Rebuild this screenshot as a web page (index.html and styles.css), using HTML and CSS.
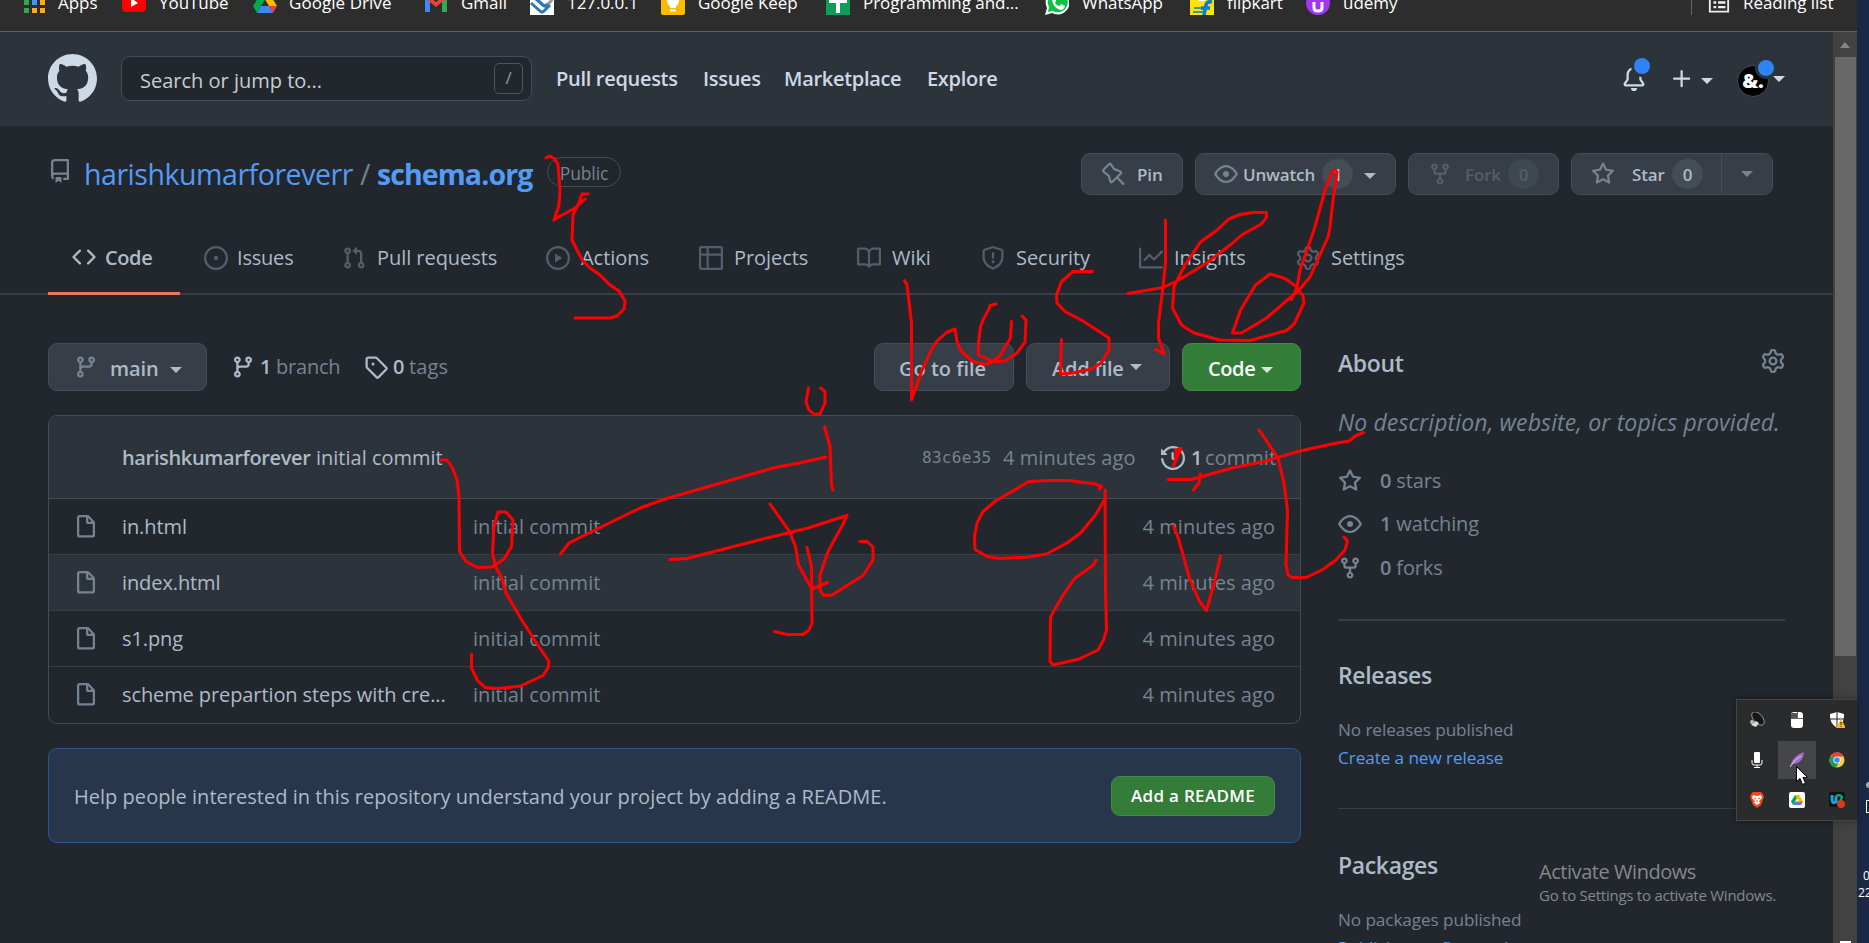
FILE: index.html
```
<!DOCTYPE html>
<html lang="en">
<head>
<meta charset="utf-8">
<title>harishkumarforeverr/schema.org</title>
<link rel="stylesheet" href="styles.css">
</head>
<body>
<svg class="defs" width="0" height="0">
  <symbol id="repo" viewBox="0 0 16 16"><path fill-rule="evenodd" d="M2 2.5A2.5 2.5 0 014.5 0h8.75a.75.75 0 01.75.75v12.5a.75.75 0 01-.75.75h-2.5a.75.75 0 110-1.5h1.75v-2h-8a1 1 0 00-.714 1.7.75.75 0 01-1.072 1.05A2.495 2.495 0 012 11.5v-9zm10.5-1V9h-8c-.356 0-.694.074-1 .208V2.5a1 1 0 011-1h8zM5 12.25v3.25a.25.25 0 00.4.2l1.45-1.087a.25.25 0 01.3 0L8.6 15.7a.25.25 0 00.4-.2v-3.25a.25.25 0 00-.25-.25h-3.5a.25.25 0 00-.25.25z"/></symbol>
  <symbol id="code" viewBox="0 0 16 16"><path fill-rule="evenodd" d="M4.72 3.22a.75.75 0 011.06 1.06L2.06 8l3.72 3.72a.75.75 0 11-1.06 1.06L.47 8.53a.75.75 0 010-1.06l4.25-4.25zm6.56 0a.75.75 0 10-1.06 1.06L13.94 8l-3.72 3.72a.75.75 0 101.06 1.06l4.25-4.25a.75.75 0 000-1.06l-4.25-4.25z"/></symbol>
  <symbol id="issue" viewBox="0 0 16 16"><path d="M8 9.5a1.5 1.5 0 100-3 1.5 1.5 0 000 3z"/><path fill-rule="evenodd" d="M8 0a8 8 0 100 16A8 8 0 008 0zM1.5 8a6.5 6.5 0 1113 0 6.5 6.5 0 01-13 0z"/></symbol>
  <symbol id="pull" viewBox="0 0 16 16"><path fill-rule="evenodd" d="M7.177 3.073L9.573.677A.25.25 0 0110 .854v4.792a.25.25 0 01-.427.177L7.177 3.427a.25.25 0 010-.354zM3.75 2.5a.75.75 0 100 1.5.75.75 0 000-1.5zm-2.25.75a2.25 2.25 0 113 2.122v5.256a2.251 2.251 0 11-1.5 0V5.372A2.25 2.25 0 011.5 3.25zM11 2.5h-1V4h1a1 1 0 011 1v5.628a2.251 2.251 0 101.5 0V5A2.5 2.5 0 0011 2.5zm1 10.25a.75.75 0 111.5 0 .75.75 0 01-1.5 0zM3.75 12a.75.75 0 100 1.5.75.75 0 000-1.5z"/></symbol>
  <symbol id="play" viewBox="0 0 16 16"><path fill-rule="evenodd" d="M1.5 8a6.5 6.5 0 1113 0 6.5 6.5 0 01-13 0zM8 0a8 8 0 100 16A8 8 0 008 0zM6.379 5.227A.25.25 0 006 5.442v5.117a.25.25 0 00.379.214l4.264-2.559a.25.25 0 000-.428L6.379 5.227z"/></symbol>
  <symbol id="table" viewBox="0 0 16 16"><path fill-rule="evenodd" d="M1.75 0A1.75 1.75 0 000 1.75v12.5C0 15.216.784 16 1.75 16h12.5A1.75 1.75 0 0016 14.25V1.75A1.75 1.75 0 0014.25 0H1.75zM1.5 1.75a.25.25 0 01.25-.25H5V5H1.5V1.75zM6.5 1.5V5h8V1.75a.25.25 0 00-.25-.25H6.5zm8 5h-8v8h7.75a.25.25 0 00.25-.25V6.5zM5 14.5v-8H1.5v7.75c0 .138.112.25.25.25H5z"/></symbol>
  <symbol id="book" viewBox="0 0 16 16"><path fill-rule="evenodd" d="M0 1.75A.75.75 0 01.75 1h4.253c1.227 0 2.317.59 3 1.501A3.744 3.744 0 0111.006 1h4.245a.75.75 0 01.75.75v10.5a.75.75 0 01-.75.75h-4.507a2.25 2.25 0 00-1.591.659l-.622.621a.75.75 0 01-1.06 0l-.622-.621A2.25 2.25 0 005.258 13H.75a.75.75 0 01-.75-.75V1.75zm8.755 3a2.25 2.25 0 012.25-2.25H14.5v9h-3.757c-.71 0-1.4.201-1.992.572l.004-7.322zm-1.504 7.324l.004-5.073-.002-2.253A2.25 2.25 0 005.003 2.5H1.5v9h3.757a3.75 3.75 0 011.994.574z"/></symbol>
  <symbol id="shield" viewBox="0 0 16 16"><path fill-rule="evenodd" d="M7.467.133a1.75 1.75 0 011.066 0l5.25 1.68A1.75 1.75 0 0115 3.48V7c0 1.566-.32 3.182-1.303 4.682-.983 1.498-2.585 2.813-5.032 3.855a1.7 1.7 0 01-1.33 0c-2.447-1.042-4.049-2.357-5.032-3.855C1.32 10.182 1 8.566 1 7V3.48a1.75 1.75 0 011.217-1.667l5.25-1.68zm.61 1.429a.25.25 0 00-.153 0l-5.25 1.68a.25.25 0 00-.174.238V7c0 1.358.275 2.666 1.057 3.86.784 1.194 2.121 2.34 4.366 3.297a.2.2 0 00.154 0c2.245-.956 3.582-2.104 4.366-3.298C13.225 9.666 13.5 8.36 13.5 7V3.48a.25.25 0 00-.174-.237l-5.25-1.68zM9 10.5a1 1 0 11-2 0 1 1 0 012 0zm-.25-5.75a.75.75 0 10-1.5 0v3a.75.75 0 001.5 0v-3z"/></symbol>
  <symbol id="graph" viewBox="0 0 16 16"><path fill-rule="evenodd" d="M1.5 1.75a.75.75 0 00-1.5 0v12.5c0 .414.336.75.75.75h14.5a.75.75 0 000-1.5H1.5V1.75zm14.28 2.53a.75.75 0 00-1.06-1.06L10 7.94 7.53 5.47a.75.75 0 00-1.06 0L3.22 8.72a.75.75 0 001.06 1.06L7 7.06l2.47 2.47a.75.75 0 001.06 0l5.25-5.25z"/></symbol>
  <symbol id="gear" viewBox="0 0 16 16"><path fill-rule="evenodd" d="M7.429 1.525a6.593 6.593 0 011.142 0c.036.003.108.036.137.146l.289 1.105c.147.56.55.967.997 1.189.174.086.341.183.501.29.417.278.97.423 1.53.27l1.102-.303c.11-.03.175.016.195.046.219.31.41.641.573.989.014.031.022.11-.059.19l-.815.806c-.411.406-.562.957-.53 1.456a4.588 4.588 0 010 .582c-.032.499.119 1.05.53 1.456l.815.806c.08.08.073.159.059.19a6.494 6.494 0 01-.573.99c-.02.029-.086.074-.195.045l-1.103-.303c-.559-.153-1.112-.008-1.529.27-.16.107-.327.204-.5.29-.449.222-.851.628-.998 1.189l-.289 1.105c-.029.11-.101.143-.137.146a6.613 6.613 0 01-1.142 0c-.036-.003-.108-.037-.137-.146l-.289-1.105c-.147-.56-.55-.967-.997-1.189a4.502 4.502 0 01-.501-.29c-.417-.278-.97-.423-1.53-.27l-1.102.303c-.11.03-.175-.016-.195-.046a6.492 6.492 0 01-.573-.989c-.014-.031-.022-.11.059-.19l.815-.806c.411-.406.562-.957.53-1.456a4.587 4.587 0 010-.582c.032-.499-.119-1.05-.53-1.456l-.815-.806c-.08-.08-.073-.159-.059-.19a6.44 6.44 0 01.573-.99c.02-.029.086-.075.195-.045l1.103.303c.559.153 1.112.008 1.529-.27.16-.107.327-.204.5-.29.449-.222.851-.628.998-1.189l.289-1.105c.029-.11.101-.143.137-.146zM8 0c-.236 0-.47.01-.701.03-.743.065-1.29.615-1.458 1.261l-.29 1.106c-.017.066-.078.158-.211.224a5.994 5.994 0 00-.668.386c-.123.082-.233.09-.3.071L3.27 2.776c-.644-.177-1.392.02-1.82.63a7.977 7.977 0 00-.704 1.217c-.315.675-.111 1.422.363 1.891l.815.806c.05.048.098.147.088.294a6.084 6.084 0 000 .772c.01.147-.038.246-.088.294l-.815.806c-.474.469-.678 1.216-.363 1.891.2.428.436.835.704 1.218.428.609 1.176.806 1.82.63l1.103-.303c.066-.019.176-.011.299.071.213.143.436.272.668.386.133.066.194.158.212.224l.289 1.106c.169.646.715 1.196 1.458 1.26a8.094 8.094 0 001.402 0c.743-.064 1.29-.614 1.458-1.26l.29-1.106c.017-.066.078-.158.211-.224a5.98 5.98 0 00.668-.386c.123-.082.233-.09.3-.071l1.102.302c.644.177 1.392-.02 1.82-.63.268-.382.505-.789.704-1.217.315-.675.111-1.422-.364-1.891l-.814-.806c-.05-.048-.098-.147-.088-.294a6.1 6.1 0 000-.772c-.01-.147.039-.246.088-.294l.814-.806c.475-.469.679-1.216.364-1.891a7.992 7.992 0 00-.704-1.218c-.428-.609-1.176-.806-1.82-.63l-1.103.303c-.066.019-.176.011-.299-.071a5.991 5.991 0 00-.668-.386c-.133-.066-.194-.158-.212-.224L10.16 1.29C9.99.645 9.444.095 8.701.031A8.094 8.094 0 008 0zm1.5 8a1.5 1.5 0 11-3 0 1.5 1.5 0 013 0zM11 8a3 3 0 11-6 0 3 3 0 016 0z"/></symbol>
  <symbol id="eye" viewBox="0 0 16 16"><path fill-rule="evenodd" d="M1.679 7.932c.412-.621 1.242-1.75 2.366-2.717C5.175 4.242 6.527 3.5 8 3.5c1.473 0 2.824.742 3.955 1.715 1.124.967 1.954 2.096 2.366 2.717a.119.119 0 010 .136c-.412.621-1.242 1.75-2.366 2.717C10.825 11.758 9.473 12.5 8 12.5c-1.473 0-2.824-.742-3.955-1.715C2.92 9.818 2.09 8.69 1.679 8.068a.119.119 0 010-.136zM8 2c-1.981 0-3.67.992-4.933 2.078C1.797 5.169.88 6.423.43 7.1a1.619 1.619 0 000 1.798c.45.678 1.367 1.932 2.637 3.024C4.329 13.008 6.019 14 8 14c1.981 0 3.67-.992 4.933-2.078 1.27-1.091 2.187-2.345 2.637-3.023a1.619 1.619 0 000-1.798c-.45-.678-1.367-1.932-2.637-3.023C11.671 2.992 9.981 2 8 2zm0 8a2 2 0 100-4 2 2 0 000 4z"/></symbol>
  <symbol id="fork" viewBox="0 0 16 16"><path fill-rule="evenodd" d="M5 3.25a.75.75 0 11-1.5 0 .75.75 0 011.5 0zm0 2.122a2.25 2.25 0 10-1.5 0v.878A2.25 2.25 0 005.75 8.5h1.5v2.128a2.251 2.251 0 101.5 0V8.5h1.5a2.25 2.25 0 002.25-2.25v-.878a2.25 2.25 0 10-1.5 0v.878a.75.75 0 01-.75.75h-4.5A.75.75 0 015 6.25v-.878zm3.75 7.378a.75.75 0 11-1.5 0 .75.75 0 011.5 0zm3-8.75a.75.75 0 100-1.5.75.75 0 000 1.5z"/></symbol>
  <symbol id="star" viewBox="0 0 16 16"><path fill-rule="evenodd" d="M8 .25a.75.75 0 01.673.418l1.882 3.815 4.21.612a.75.75 0 01.416 1.279l-3.046 2.97.719 4.192a.75.75 0 01-1.088.791L8 12.347l-3.766 1.98a.75.75 0 01-1.088-.79l.72-4.194L.818 6.374a.75.75 0 01.416-1.28l4.21-.611L7.327.668A.75.75 0 018 .25zm0 2.445L6.615 5.5a.75.75 0 01-.564.41l-3.097.45 2.24 2.184a.75.75 0 01.216.664l-.528 3.084 2.769-1.456a.75.75 0 01.698 0l2.77 1.456-.53-3.084a.75.75 0 01.216-.664l2.24-2.183-3.096-.45a.75.75 0 01-.564-.41L8 2.694v.001z"/></symbol>
  <symbol id="pin" viewBox="0 0 16 16"><path fill="none" stroke="currentColor" stroke-width="1.5" stroke-linejoin="round" stroke-linecap="round" d="M10.6 10.2L14.900 14.600M6.600 1.500L8.600 4.600L12.900 6.300Q13.900 6.900 13.200 7.700L7.500 13.300Q6.700 13.900 6.300 13L5.200 9.200L1.700 6.400Q1.100 5.800 1.700 5.200L5.300 1.500Q6 .8 6.600 1.500z"/></symbol>
  <symbol id="branch" viewBox="0 0 16 16"><path fill-rule="evenodd" d="M11.75 2.5a.75.75 0 100 1.5.75.75 0 000-1.5zm-2.25.75a2.25 2.25 0 113 2.122V6A2.5 2.5 0 0110 8.5H6a1 1 0 00-1 1v1.128a2.251 2.251 0 11-1.5 0V5.372a2.25 2.25 0 111.5 0v1.836A2.492 2.492 0 016 7h4a1 1 0 001-1v-.628A2.25 2.25 0 019.5 3.25zM4.25 12a.75.75 0 100 1.5.75.75 0 000-1.5zM3.5 3.25a.75.75 0 111.5 0 .75.75 0 01-1.5 0z"/></symbol>
  <symbol id="tag" viewBox="0 0 16 16"><path fill-rule="evenodd" d="M2.5 7.775V2.75a.25.25 0 01.25-.25h5.025a.25.25 0 01.177.073l6.25 6.25a.25.25 0 010 .354l-5.025 5.025a.25.25 0 01-.354 0l-6.25-6.25a.25.25 0 01-.073-.177zm-1.5 0V2.75C1 1.784 1.784 1 2.75 1h5.025c.464 0 .91.184 1.238.513l6.25 6.25a1.75 1.75 0 010 2.474l-5.026 5.026a1.75 1.75 0 01-2.474 0l-6.25-6.25A1.75 1.75 0 011 7.775zM6 5a1 1 0 100 2 1 1 0 000-2z"/></symbol>
  <symbol id="history" viewBox="0 0 16 16"><path fill-rule="evenodd" d="M1.643 3.143L.427 1.927A.25.25 0 000 2.104V5.75c0 .138.112.25.25.25h3.646a.25.25 0 00.177-.427L2.715 4.215a6.5 6.5 0 11-1.18 4.458.75.75 0 10-1.493.154 8.001 8.001 0 101.6-5.684zM7.75 4a.75.75 0 01.75.75v2.992l2.028.812a.75.75 0 01-.557 1.392l-2.5-1A.75.75 0 017 8.25v-3.5A.75.75 0 017.75 4z"/></symbol>
  <symbol id="file" viewBox="0 0 16 16"><path fill-rule="evenodd" d="M3.75 1.5a.25.25 0 00-.25.25v11.5c0 .138.112.25.25.25h8.5a.25.25 0 00.25-.25V6H9.75A1.75 1.75 0 018 4.25V1.5H3.75zm5.75.56v2.19c0 .138.112.25.25.25h2.19L9.5 2.06zM2 1.75C2 .784 2.784 0 3.75 0h5.086c.464 0 .909.184 1.237.513l3.414 3.414c.329.328.513.773.513 1.237v8.086A1.75 1.75 0 0112.25 15h-8.5A1.75 1.75 0 012 13.25V1.75z"/></symbol>
  <symbol id="bell" viewBox="0 0 16 16"><path d="M8 16a2 2 0 001.985-1.75c.017-.137-.097-.25-.235-.25h-3.5c-.138 0-.252.113-.235.25A2 2 0 008 16z"/><path fill-rule="evenodd" d="M8 1.5A3.5 3.5 0 004.5 5v2.947c0 .346-.102.683-.294.97l-1.703 2.556a.018.018 0 00-.003.01l.001.006c0 .002.002.004.004.006a.017.017 0 00.006.004l.007.001h10.964l.007-.001a.016.016 0 00.006-.004.016.016 0 00.004-.006l.001-.007a.017.017 0 00-.003-.01l-1.703-2.554a1.75 1.75 0 01-.294-.97V5A3.5 3.5 0 008 1.5zM3 5a5 5 0 0110 0v2.947c0 .05.015.098.042.139l1.703 2.555A1.518 1.518 0 0113.482 13H2.518a1.518 1.518 0 01-1.263-2.36l1.703-2.554A.25.25 0 003 7.947V5z"/></symbol>
  <symbol id="plus" viewBox="0 0 16 16"><path d="M7.75 2a.75.75 0 01.75.75V7h4.25a.75.75 0 110 1.5H8.5v4.25a.75.75 0 11-1.5 0V8.5H2.75a.75.75 0 010-1.5H7V2.75A.75.75 0 017.75 2z"/></symbol>
  <symbol id="drive" viewBox="0 0 24 22"><path fill="#ffba00" d="M8 1h8l8 13h-8z"/><path fill="#00ac47" d="M8 1l4 6.5L4 21 0 14z"/><path fill="#4285f4" d="M8 14h8.5L20 21H4z"/><path fill="#ea4335" d="M16 14h8l-4 7z"/></symbol>
</svg>

<div class="desktop">
  <div class="browser">
    <div class="bookmarks">
      <div class="bm"><svg class="fav apps" viewBox="0 0 24 24"><path fill="#34a853" d="M1 0h5v5H1zM1 9h5v5H1zM1 17h5v5H1z"/><path fill="#4299f5" d="M9 9h5v5H9z"/><path fill="#fbab19" d="M17 9h5v5h-5zM9 17h5v5H9zM17 17h5v5h-5z"/></svg><span>Apps</span></div>
      <div class="bm"><svg class="fav" viewBox="0 0 24 24"><rect y="2" width="24" height="19" rx="4" fill="red"/><path d="M9 7l7 5-7 4z" fill="#fff"/></svg><span>YouTube</span></div>
      <div class="bm"><svg class="fav"><use href="#drive"/></svg><span>Google Drive</span></div>
      <div class="bm"><svg class="fav" viewBox="0 0 24 24"><path fill="#4285f4" d="M1 4h5v17H1z"/><path fill="#34a853" d="M18 4h5v17h-5z"/><path fill="#ea4335" d="M1 3l11 8 11-8v4l-11 9L1 7z"/></svg><span>Gmail</span></div>
      <div class="bm"><svg class="fav" viewBox="0 0 24 24"><path fill="#fff" d="M0 0h24v24H0z"/><path d="M9 10l5 5q2 1 3-1l4-4q2-3-1-5" stroke="#999" stroke-width="3" fill="none"/><path d="M1 12l9 8q2 2 4 0l6-6M6 8l7 6q2 2 4-1" stroke="#2a78b5" stroke-width="3" fill="none"/></svg><span>127.0.0.1</span></div>
      <div class="bm"><svg class="fav" viewBox="0 0 24 24"><rect width="24" height="24" rx="2" fill="#ffba00"/><circle cx="12" cy="10" r="6" fill="#fff"/><path d="M9 13h6v4H9zM9 18.500h6v2H9z" fill="#fff"/></svg><span>Google Keep</span></div>
      <div class="bm"><svg class="fav" viewBox="0 0 24 24"><path fill="#0f9d58" d="M0 0h24v24H0z"/><path fill="#fff" d="M3 8h18v4h-7v10h-4V12H3z"/></svg><span>Programming and...</span></div>
      <div class="bm"><svg class="fav" viewBox="0 0 24 24"><path fill="#fff" d="M0 24l2-7A12 12 0 1 1 7 22z"/><path fill="#0dc143" d="M3 21l1-5A10 10 0 1 1 8 20z"/><path fill="#fff" d="M7 7l3-1 1 4-1 2q2 3 5 3l1-2 4 2q-1 4-5 4Q7 16 7 7z"/></svg><span>WhatsApp</span></div>
      <div class="bm"><svg class="fav" viewBox="0 0 24 24"><path fill="#ffe500" d="M0 0h24v24H0z"/><path fill="#fff" d="M8 5h7v5H8z"/><path fill="none" stroke="#047bd5" stroke-width="3.500" d="M22 11q-5-1-6 3l-2 10M11 17h9"/><path stroke="#047bd5" stroke-width="1.500" d="M4 17h8M3 21h10"/></svg><span>flipkart</span></div>
      <div class="bm"><svg class="fav" viewBox="0 0 24 24"><circle cx="12" cy="12" r="12" fill="#a435f0"/><path d="M8 11v6q0 3 4 3t4-3v-6" stroke="#fff" stroke-width="3" fill="none"/></svg><span>udemy</span></div>
      <div class="bm reading"><svg class="fav" viewBox="0 0 24 24"><path fill="none" stroke="#eee" stroke-width="2" d="M2 2h20v20H2z"/><path stroke="#eee" stroke-width="2.500" d="M6 12h3M11 12h8M6 17h3M11 17h8"/></svg><span>Reading list</span></div>
    </div>
    <div class="view">
      <div class="page">
        <header class="top">
          <svg class="logo" viewBox="0 0 16 16"><path fill-rule="evenodd" d="M8 0C3.58 0 0 3.58 0 8c0 3.54 2.29 6.53 5.47 7.59.4.07.55-.17.55-.38 0-.19-.01-.82-.01-1.49-2.01.37-2.53-.49-2.69-.94-.09-.23-.48-.94-.82-1.13-.28-.15-.68-.52-.01-.53.63-.01 1.08.58 1.23.82.72 1.21 1.87.87 2.33.66.07-.52.28-.87.51-1.070-1.78-.2-3.640-.89-3.640-3.950 0-.87.31-1.590.82-2.150-.08-.2-.36-1.020.08-2.120 0 0 .67-.21 2.200.82.64-.18 1.320-.27 2-.27.68 0 1.360.09 2 .27 1.530-1.040 2.200-.82 2.200-.82.44 1.100.16 1.920.08 2.120.51.56.82 1.270.82 2.150 0 3.070-1.870 3.750-3.650 3.950.29.25.54.73.54 1.480 0 1.070-.01 1.930-.01 2.200 0 .21.15.46.55.38A8.013 8.013 0 0016 8c0-4.420-3.580-8-8-8z"/></svg>
          <div class="search"><span>Search or jump to...</span><kbd>/</kbd></div>
          <nav><a>Pull requests</a><a>Issues</a><a>Marketplace</a><a>Explore</a></nav>
          <div class="user">
            <div class="bellwrap"><svg class="ic"><use href="#bell"/></svg><i class="dot"></i></div>
            <div class="plus"><svg class="ic"><use href="#plus"/></svg><i class="caret"></i></div>
            <div class="avatar"><b>&amp;.</b><i class="dot"></i></div><i class="caret"></i>
          </div>
        </header>

        <div class="repohead">
          <svg class="ic muted"><use href="#repo"/></svg>
          <h1><a>harishkumarforeverr</a><span class="slash">/</span><a class="name">schema.org</a></h1>
          <span class="pill">Public</span>
          <div class="actions">
            <div class="btn sm pinb"><svg class="ic"><use href="#pin"/></svg><span>Pin</span></div>
            <div class="btn sm unwatch"><svg class="ic"><use href="#eye"/></svg><span>Unwatch</span><em>1</em><i class="caret"></i></div>
            <div class="btn sm forkb"><svg class="ic"><use href="#fork"/></svg><span>Fork</span><em>0</em></div>
            <div class="btn sm starb"><svg class="ic"><use href="#star"/></svg><span>Star</span><em>0</em><div class="more"><i class="caret"></i></div></div>
          </div>
        </div>

        <div class="tabs">
          <div class="tab on"><svg class="ic"><use href="#code"/></svg><span>Code</span></div>
          <div class="tab"><svg class="ic"><use href="#issue"/></svg><span>Issues</span></div>
          <div class="tab"><svg class="ic"><use href="#pull"/></svg><span>Pull requests</span></div>
          <div class="tab"><svg class="ic"><use href="#play"/></svg><span>Actions</span></div>
          <div class="tab"><svg class="ic"><use href="#table"/></svg><span>Projects</span></div>
          <div class="tab"><svg class="ic"><use href="#book"/></svg><span>Wiki</span></div>
          <div class="tab"><svg class="ic"><use href="#shield"/></svg><span>Security</span></div>
          <div class="tab"><svg class="ic"><use href="#graph"/></svg><span>Insights</span></div>
          <div class="tab"><svg class="ic"><use href="#gear"/></svg><span>Settings</span></div>
        </div>

        <div class="content">
          <main>
            <div class="toolbar">
              <div class="btn branchb"><svg class="ic"><use href="#branch"/></svg><span>main</span><i class="caret"></i></div>
              <div class="stat s1"><svg class="ic"><use href="#branch"/></svg><b>1</b><span>branch</span></div>
              <div class="stat s2"><svg class="ic"><use href="#tag"/></svg><b>0</b><span>tags</span></div>
              <div class="right">
                <div class="btn goto"><span>Go to file</span></div>
                <div class="btn add"><span>Add file</span><i class="caret"></i></div>
                <div class="btn green codeb"><span>Code</span><i class="caret"></i></div>
              </div>
            </div>
            <div class="files">
              <div class="fhead"><b>harishkumarforever</b><span class="msg">initial commit</span><code>83c6e35</code><span class="ago">4 minutes ago</span><svg class="ic"><use href="#history"/></svg><b class="n">1</b><span class="c">commit</span></div>
              <div class="row first"><svg class="ic"><use href="#file"/></svg><span class="fn">in.html</span><span class="cm">initial commit</span><span class="ago">4 minutes ago</span></div>
              <div class="row hover"><svg class="ic"><use href="#file"/></svg><span class="fn">index.html</span><span class="cm">initial commit</span><span class="ago">4 minutes ago</span></div>
              <div class="row"><svg class="ic"><use href="#file"/></svg><span class="fn">s1.png</span><span class="cm">initial commit</span><span class="ago">4 minutes ago</span></div>
              <div class="row"><svg class="ic"><use href="#file"/></svg><span class="fn long">scheme prepartion steps with cre...</span><span class="cm">initial commit</span><span class="ago">4 minutes ago</span></div>
            </div>
            <div class="readme"><span>Help people interested in this repository understand your project by adding a README.</span><div class="btn sm green">Add a README</div></div>
          </main>
          <aside>
            <div class="about"><h2>About</h2><svg class="ic muted"><use href="#gear"/></svg></div>
            <p class="desc">No description, website, or topics provided.</p>
            <div class="meta"><svg class="ic"><use href="#star"/></svg><span><b>0</b> stars</span></div>
            <div class="meta"><svg class="ic"><use href="#eye"/></svg><span><b>1</b> watching</span></div>
            <div class="meta"><svg class="ic"><use href="#fork"/></svg><span><b>0</b> forks</span></div>
            <section class="rel"><h2>Releases</h2><p>No releases published</p><a>Create a new release</a></section>
            <section class="pkg"><h2>Packages</h2><p>No packages published</p><a>Publish your first package</a></section>
          </aside>
        </div>
      </div>
      <div class="scrollbar"><i class="up"></i><div class="thumb"></div><i class="down"></i></div>
    </div>
  </div>
  <div class="strip"></div>

  <div class="watermark"><p>Activate Windows</p><small>Go to Settings to activate Windows.</small></div>

  <svg class="ink" viewBox="0 0 1869 943">
    <path d="M546 158L550 156L555 159L558 165L560 190L559 205L554 220L560 216L566 213L575 208L585 199M588 194L582 194L579 203L573 215L572 240L577 250L583 261L590 268L600 275L610 285L619 291L625 301L624 309L617 316L610 318L575 318"/>
    <path d="M904.500 280.500L907 285L911.500 323L911.500 400L921.500 371.500L930.500 351.500L936.500 341.500L946.500 332.500L955 329L957 341.500L961 351L973 361.500L985 364.500L991.500 362.500L1000 355.500L1010.500 338L1011.500 321.500"/>
    <path d="M996 304L990 305.500L989 309L984 318L980.500 326.500L978.500 343L978.500 355L993 361.500L1005 361L1017 353L1025 342L1026 320L1022 316"/>
    <path d="M1092.500 271.500L1073 271.500L1061.500 281.500L1056.500 295L1057 303L1065 311.500L1083 321L1109 338L1109 350L1101.500 362.500L1091.500 369L1073 373L1060.500 374L1061.500 339.500"/>
    <path d="M1165.500 220L1165.500 263L1163 287L1158.500 323L1158.500 338L1164 354L1155.500 349.500"/>
    <path d="M1128 293.500L1163 287.500L1178 280.500L1206.500 263L1231.500 244L1241.500 235L1261.500 224L1266.500 217L1266.500 212.500L1253 212.500L1240 214.500L1229 219L1216.500 230.500L1200.500 242L1185 265L1174 286.500L1172.500 308L1181.500 325L1194 333L1220 340L1250 340.500L1286.500 330.500L1294 324L1304 303L1303 296L1296.500 286.500L1285 278.500L1270 274L1255.500 285L1240.500 310L1232.500 333L1241.500 333L1266.500 318L1299 290L1310 277L1328 237L1330 227L1333 200L1337 172L1335 170L1333 171L1326 187L1314 230L1300 270L1297 287L1291.500 299.500"/>
    <path d="M808.500 388L806 402L809 410L814 414.500L820 414L825 403L825 391.500L820.500 388M824.500 426.500L830 446.500L831.500 485L833 490"/>
    <path d="M560.500 554L569 543L592 531.500L640 508L665 499L775 467.500L799.500 463L826 457"/>
    <path d="M670 559.500L687 558.500L763 539L808 528L847 515.500L843 524L828 551.500L820 575L820 590L823.500 595.500L832 595L863 575.500L873 560L873 547L867 541.500L860 541.500"/>
    <path d="M770 504L789.500 531.500L795.500 546.500L798.500 565L812 589L827.500 582.500M807 547.500L811.500 566.500L812 623L809 630L803 634.500L787 634.500L774.500 631.500"/>
    <path d="M1099.500 489L1101.500 486.500L1095.500 484L1069 480.500L1048.500 480.500L1029 481.500L995.500 501L983 511.500L977 523L974.500 536.500L975 549.500L987 556.500L999.500 558.500L1028 557L1046.500 554L1067 543L1081 532.500L1095.500 515L1105.500 498"/>
    <path d="M1105 490L1105.500 590L1106.500 630L1103.500 640L1098 650L1079 659L1053 665L1050 661L1050.500 617L1063 595L1075 578L1093.500 565L1096 560"/>
    <path d="M1173.500 526L1178 537L1189.500 578L1199.500 601.500L1206.500 610.500L1215 580L1220.500 556"/>
    <path d="M1168 479.500L1191.500 479.500L1232 468L1264 461.500L1300 451L1334 443.500L1349 441L1356 435.500L1363.500 432.500M1200.500 474L1199 483L1193.500 490M1176 450L1176 458L1173.500 466L1181 448.500Z"/>
    <path d="M1259 430L1266 440L1278 458L1284 483.500L1287.500 510L1286 565L1288 575L1292 577.500L1306 577.500L1322 570L1336 560L1345 550L1347.500 541L1344 537"/>
    <path d="M441 460L447 460L452 467L457 480L459 497L459.500 551.500L466 561.500L477 567.500L492 567L504 559L511.500 546.500L513 520L506 512L498 512L494 526.500L492.500 553L496 568L501 576L506 593L520.500 618L534.500 640L549 661.500L548 668L543 675.500L520.500 686L498 688.500L485 687.500L477.500 680.500L471.500 668L471.500 654"/>
  </svg>

  <div class="tray">
    <div class="cell"><svg viewBox="0 0 16 16"><ellipse cx="9" cy="6.500" rx="8" ry="4.500" transform="rotate(48 9 6.500)" fill="#161616" stroke="#aaa" stroke-width=".8"/><path d="M2 13l5-4 3 2-3 4z" fill="#ddd"/><circle cx="3" cy="10" r="2" fill="#bbb"/></svg></div>
    <div class="cell"><svg viewBox="0 0 16 16"><rect x="2" width="12" height="16" rx="3" fill="#fff"/><path d="M3 1h5v5H2V2z" fill="#555"/><path d="M2 6.500h12M8.500 0v6" stroke="#666"/></svg></div>
    <div class="cell"><svg viewBox="0 0 16 16"><path d="M8 0l7 2q1 9-7 14Q0 11 1 2z" fill="#fff"/><path d="M8 0v16M1 7h14" stroke="#222"/><path d="M12 7l5 9H7z" fill="#f8bc28"/><path d="M12 10v3M12 14v1" stroke="#222"/></svg></div>
    <div class="cell"><svg viewBox="0 0 16 16"><rect x="5" y="0" width="6" height="11" rx="1" fill="#fff"/><path d="M3 8v3q0 2 2 2h6q2 0 2-2V8M8 13v3M5 15.500h6" stroke="#fff" fill="none"/></svg></div>
    <div class="cell sel"><svg viewBox="0 0 16 16"><path d="M1 15Q3 4 15 0q-1 12-12 12z" fill="#a36ac7"/><path d="M1 15Q6 7 12 4" stroke="#e3cdf0" fill="none"/></svg></div>
    <div class="cell"><svg viewBox="0 0 16 16"><circle cx="8" cy="8" r="7.500" fill="#ffcd40"/><path d="M8 8L1.500 4A7.500 7.500 0 0 1 14.700 4.500H8z" fill="#e0473a"/><path d="M8 8L1.500 4A7.500 7.500 0 0 0 7 15.500l3-5z" fill="#199e5a"/><circle cx="8" cy="8" r="3.600" fill="#fff"/><circle cx="8" cy="8" r="2.800" fill="#4688f4"/></svg></div>
    <div class="cell"><svg viewBox="0 0 16 16"><path d="M4 0h8l2 2 1 3-3 8-4 3-4-3L1 5l1-3z" fill="#f4431f"/><path d="M4 3l4 1 4-1 1 3-3 3 1 2-3 2-3-2 1-2-3-3z" fill="#fff"/><path d="M5 6l2 1M11 6L9 7M8 8v2" stroke="#f4431f"/></svg></div>
    <div class="cell"><svg viewBox="0 0 16 16"><rect width="16" height="16" rx="2" fill="#fff"/><use href="#drive" x="2" y="2" width="12" height="12"/></svg></div>
    <div class="cell"><svg viewBox="0 0 16 16"><rect width="16" height="15" rx="3" fill="#111"/><path d="M3 3v4q0 5 4 3V4" stroke="#16a2e8" stroke-width="3" fill="none"/><path d="M7 4q4-2 6 1l-2 5H8" stroke="#0aa37c" stroke-width="2.500" fill="none"/><circle cx="12" cy="12" r="4" fill="#d93a20"/></svg></div>
  </div>
  <svg class="cursor" viewBox="0 0 12 19"><path d="M.5.500v15l3.500-3 2.500 6 3-1.300L7 11.500h4.500z" fill="#fff" stroke="#000"/></svg>
  <div class="clock"><i></i><b></b><span class="t1">0</span><span>22</span></div>
</div>
</body>
</html>
```
FILE: styles.css
```
* { box-sizing: border-box; }
body { margin: 0; width: 1869px; height: 943px; overflow: hidden; background: #22272e; color: #adbac7; font: 20px/30px "Open Sans", "Noto Sans", sans-serif; letter-spacing: -0.1px; }
h1, h2, p { margin: 0; }
b, h2 { font-weight: 600; }
svg { fill: currentColor; display: block; flex: none; }
.defs { position: absolute; }
.ic { width: 24px; height: 24px; }
.muted { color: #768390; }
.caret { width: 0; height: 0; flex: none; border: 6px solid transparent; border-top-color: currentColor; border-bottom: 0; }

.desktop { position: relative; display: flex; width: 1869px; height: 943px; overflow: hidden; }
.browser { width: 1857px; display: flex; flex-direction: column; }
.strip { width: 12px; background: #1b2843; }

/* bookmarks bar, partly scrolled off the top edge */
.bookmarks { height: 32px; flex: none; background: #2d2d2d; border-bottom: 1px solid #60605c; display: grid; grid-template-columns: 99px 131px 171px 106px 131px 165px 219px 145px 116px 385px 166px; padding-left: 23px; color: #fff; font-size: 17px; line-height: 24px; letter-spacing: -0.05px; }
.bm { display: flex; gap: 13px; height: 24px; margin-top: -9px; white-space: nowrap; }
.bm:nth-child(1) { gap: 11px; }
.bm:nth-child(3) { letter-spacing: .05px; gap: 12px; }
.fav { width: 24px; height: 24px; }
.reading { border-left: 1px solid #666; padding-left: 16px; }
.reading .fav { width: 22px; height: 23px; }

.view { display: flex; flex: 1; min-height: 0; }
.page { width: 1833px; overflow: hidden; }
.scrollbar { width: 24px; background: #424242; display: flex; flex-direction: column; align-items: center; padding-top: 10px; }
.up { border: 5px solid transparent; border-bottom: 6px solid #868686; border-top: 0; margin-bottom: 9px; }
.thumb { width: 21px; height: 599px; background: #686868; }
.down { margin-top: 285px; width: 11px; height: 2px; background: #fff; }

.top { height: 94px; background: #2d333b; display: flex; align-items: flex-start; padding-left: 48px; color: #cdd9e5; }
.logo { width: 49px; height: 49px; margin: 22px 24px 0 0; }
.search { width: 411px; height: 45px; margin-top: 24px; background: #22272e; border: 1px solid #444c56; border-radius: 9px; display: flex; justify-content: space-between; align-items: center; padding: 0 8px 0 18px; color: #c6cdd5; }
.search span { padding-top: 4px; letter-spacing: 0; }
.search kbd { width: 29px; height: 31px; border: 1px solid #4d5560; border-radius: 5px; font: 17px/28px "Open Sans", sans-serif; text-align: center; color: #909dab; }
nav { display: grid; grid-template-columns: 147px 81px 143px 90px; margin: 32px 0 0 24px; font-weight: 600; letter-spacing: -0.3px; white-space: nowrap; }
.user { display: flex; align-items: center; height: 94px; margin-left: auto; padding-right: 48px; }
.bellwrap, .avatar { position: relative; }
.bellwrap { margin-right: 24px; }
.dot { position: absolute; width: 16px; height: 16px; box-sizing: content-box; border-radius: 50%; background: #2c84f5; border: 3px solid #2d333b; right: -7px; top: -12px; }
.plus { display: flex; align-items: center; gap: 7px; margin-right: 24px; }
.plus .caret { margin-top: 3px; }
.avatar { width: 32px; height: 32px; border-radius: 50%; background: #000; border: 1px solid #444c56; text-align: center; font-size: 20px; line-height: 29px; color: #fff; margin: 4px 4px 0 0; }
.avatar b { font-weight: 800; }
.avatar .dot { top: -9px; right: -9px; }

.repohead { height: 96px; display: flex; align-items: flex-start; padding: 26px 60px 0 48px; }
.repohead > .ic { margin-top: 7px; }
h1 { font-size: 28.500px; line-height: 42px; font-weight: 400; color: #539bf5; margin: 1px 0 0 12px; display: grid; grid-template-columns: 276px 17px 170px; letter-spacing: -0.45px; white-space: nowrap; }
.slash { color: #768390; }
h1 .name { font-weight: 700; letter-spacing: -0.9px; }
.pill { width: 74px; height: 30px; border: 1px solid #444c56; border-radius: 15px; font-size: 17.500px; line-height: 30px; text-align: center; color: #768390; margin-top: 5px; }
.actions { margin: 1px 0 0 auto; display: flex; gap: 12px; }
.btn { height: 48px; display: flex; align-items: center; background: #373e47; border: 1px solid #444c56; border-radius: 9px; font-weight: 600; white-space: nowrap; }
.btn .ic, .actions .caret { color: #768390; }
.btn.sm { height: 42px; font-size: 17px; letter-spacing: -0.15px; }
.btn.sm > span { padding-top: 1px; }
.btn.green { background: #347d39; border-color: #428a48; color: #fff; }
.btn em { font-style: normal; width: 31px; height: 30px; border-radius: 15px; background: #444c56; text-align: center; line-height: 31px; }
.pinb { width: 102px; padding-left: 19px; gap: 12px; }
.unwatch { width: 201px; padding-left: 18px; gap: 5px; }
.unwatch span { width: 74px; }
.unwatch em { margin-right: 6px; }
.unwatch .caret { color: #adbac7; margin-top: 3px; }
.forkb { width: 151px; padding-left: 19px; color: #545d68; }
.forkb .ic { color: #545d68; margin-right: 13px; }
.forkb span { width: 43px; }
.forkb em { background: #3f4751; }
.starb { width: 202px; padding-left: 19px; }
.starb .ic { margin-right: 17px; }
.starb span { width: 40px; }
.starb .more { width: 51px; height: 40px; margin-left: auto; border-left: 1px solid #444c56; display: flex; align-items: center; justify-content: center; }

.tabs { display: grid; grid-template-columns: 132px 138px 204px 153px 158px 124px 158px 157px 160px; height: 73px; padding-left: 48px; border-bottom: 2px solid #373e47; }
.tab { display: flex; align-items: center; height: 73px; padding: 0 0 2px 24px; gap: 11px; color: #adbac7; white-space: nowrap; letter-spacing: -0.05px; }
.tab:nth-child(2) { gap: 9px; letter-spacing: -0.2px; }
.tab .ic { color: #545d68; }
.tab.on { border-bottom: 3px solid #ec775c; font-weight: 600; padding-bottom: 0; letter-spacing: -0.4px; gap: 9px; }
.tab.on span { padding-top: 1px; }
.tab.on .ic { color: #adbac7; }

.content { display: flex; padding: 48px 48px 0; gap: 37px; }
main { width: 1253px; }
.toolbar { display: flex; height: 48px; align-items: center; }
.toolbar .btn span { padding-top: 3px; }
.branchb { width: 159px; padding-left: 25px; gap: 12px; }
.branchb span { width: 48px; }
.branchb .caret, .codeb .caret { margin-top: 5px; }
.stat { display: flex; align-items: center; gap: 5px; color: #768390; height: 48px; align-self: flex-start; letter-spacing: -0.2px; }
.stat svg, .stat b { color: #adbac7; }
.stat b { width: 11px; }
.s1 { margin-left: 24px; width: 133px; }
.s2 { letter-spacing: .1px; }
.right { display: flex; gap: 12px; margin-left: auto; letter-spacing: -0.4px; }
.goto { width: 140px; padding-left: 24px; letter-spacing: 0; }
.add { width: 144px; padding-left: 25px; gap: 6px; letter-spacing: -0.2px; }
.codeb { width: 119px; padding-left: 25px; gap: 6px; }
.codeb .caret { color: #d5e6d6; }
.files { margin-top: 24px; border: 1px solid #444c56; border-radius: 9px; overflow: hidden; height: 309px; white-space: nowrap; }
.fhead { height: 83px; background: #2d333b; border-bottom: 1px solid #444c56; display: grid; grid-template-columns: 194px 606px 81px 158px 30px 14px 72px; align-items: center; padding: 2px 0 0 73px; letter-spacing: -0.35px; }
.fhead .msg { letter-spacing: 0; }
.fhead code { font: 16px/24px "DejaVu Sans Mono", monospace; color: #768390; letter-spacing: .3px; }
.fhead .ago, .fhead .c { color: #768390; letter-spacing: .05px; }
.row { height: 56px; display: grid; grid-template-columns: 52px 350px 584px 201px; align-items: center; padding: 1px 0 0 25px; border-top: 1px solid #373e47; color: #768390; }
.row.first { border-top: 0; height: 55px; }
.row .fn { color: #adbac7; margin-left: -4px; }
.row .cm { margin-left: -3px; letter-spacing: .05px; }
.row .ago { text-align: right; margin-right: -14px; letter-spacing: .05px; }
.hover { background: #2d333b; }
.readme { height: 95px; margin-top: 24px; background: #27364b; border: 1px solid #2f548c; border-radius: 9px; display: flex; align-items: center; justify-content: space-between; padding: 2px 25px 0 25px; white-space: nowrap; letter-spacing: .03px; }
.readme .btn { width: 164px; height: 40px; justify-content: center; letter-spacing: .3px; margin-top: -1px; }

aside { width: 447px; white-space: nowrap; }
aside h2 { font-size: 23px; line-height: 32px; letter-spacing: -0.35px; }
.about { display: flex; justify-content: space-between; padding-top: 4px; }
.about .ic { margin-top: 2px; }
.desc { font-style: italic; font-size: 23px; line-height: 36px; color: #768390; margin: 25px 0 19px; letter-spacing: .12px; }
.meta { display: flex; align-items: center; gap: 18px; height: 43.500px; color: #768390; letter-spacing: -0.15px; }
.rel { border-top: 2px solid #373e47; margin-top: 29px; padding-top: 38px; height: 189px; }
.pkg { border-top: 1px solid #373e47; padding-top: 40px; }
section p, section a { display: block; font-size: 17.200px; line-height: 28px; color: #768390; }
section p { margin-top: 25px; }
section a { color: #539bf5; }

.watermark { position: absolute; left: 1539px; top: 856px; color: #85888c; white-space: nowrap; }
.watermark p { font-size: 20px; line-height: 31px; letter-spacing: -0.45px; }
.watermark small { display: block; font-size: 15px; line-height: 15px; letter-spacing: -0.25px; padding-top: 1px; }
.ink { position: absolute; left: 0; top: 0; width: 1869px; height: 943px; fill: none; stroke: #f00; stroke-width: 3; stroke-linecap: round; stroke-linejoin: round; }
.tray { position: absolute; left: 1736px; top: 699px; width: 121px; height: 122px; background: #2a2b2c; border: 1px solid #454545; border-right: 0; display: grid; grid-template-columns: repeat(3, 38px); grid-auto-rows: 38px; gap: 2px; padding: 1px; box-shadow: 0 0 8px rgba(0, 0, 0, .35); }
.cell { display: flex; align-items: center; justify-content: center; }
.cell svg { width: 16px; height: 16px; }
.cell.sel { background: #444648; }
.cursor { position: absolute; left: 1796px; top: 766px; width: 12px; height: 19px; }
.clock { position: absolute; left: 1858px; top: 782px; width: 20px; height: 120px; color: #fff; font-size: 12px; line-height: 17px; }
.clock i { display: block; width: 6px; height: 6px; margin-left: 8px; border-radius: 50%; background: #aaa; }
.clock b { display: block; margin: 12px 0 0 8px; width: 8px; height: 13px; border: 1px solid #fff; }
.clock span { display: block; }
.clock .t1 { padding-left: 5px; margin-top: 54px; }
```
